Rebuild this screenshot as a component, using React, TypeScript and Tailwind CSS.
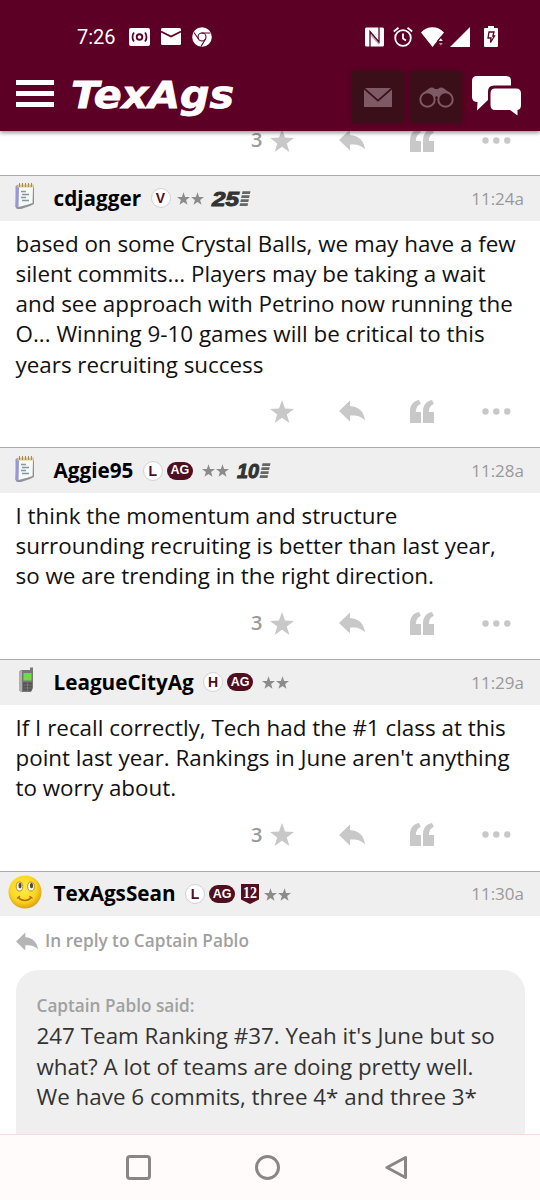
import type { ReactNode } from "react";

const Star = ({ className }: { className: string }) => (
  <svg viewBox="0 0 24 23" className={className} fill="currentColor">
    <path d="M12 0l3 8.6 9 .3-7.200 5.500 2.600 8.600L12 17.800 4.600 23l2.600-8.600L0 8.900l9-.3z" />
  </svg>
);

const ReplyArrow = ({ className }: { className: string }) => (
  <svg viewBox="0 0 26 22" className={className} fill="currentColor">
    <path d="M0 11L11 .500V6c8.500.500 14 5.500 15 14.500-4-4.500-8.500-5.500-15-5V21.500z" />
  </svg>
);

const Quote = () => (
  <svg viewBox="0 0 24 23" className="h-[23px] w-6" fill="currentColor">
    <path d="M0 23V11.500C0 5 3.500 1 9 0l1.800 3.800C8 5 6 7.500 5.800 12H11V23z" />
    <path d="M13 23V11.500C13 5 16.500 1 22 0l1.800 3.800C21 5 19 7.500 18.800 12H24V23z" />
  </svg>
);

const Dots = () => (
  <svg viewBox="0 0 29 7" className="h-[7px] w-[29px]" fill="currentColor">
    <circle cx="3.500" cy="3.500" r="3.200" />
    <circle cx="14.300" cy="3.500" r="3.200" />
    <circle cx="25.300" cy="3.500" r="3.200" />
  </svg>
);

const Notepad = () => (
  <svg viewBox="0 0 20 26" className="h-[26px] w-5">
    <path d="M1.500 2h17.500v19l-4 2-9 3H2l-1.500-2z" fill="#8e9299" />
    <path d="M.500 3h4l-1 21H.500z" fill="#9a96d6" />
    <path d="M4 4H18l-.5 16-4.500 1.500L3.500 24z" fill="#f7f9f7" />
    <path d="M2.500 1.500H19v3H2.500z" fill="#dccb97" />
    <path d="M4.500 0v4M7.500 0v4M10.500 0v4M13.500 0v4M16.500 0v4" stroke="#a8894e" />
    <path d="M6 8.500h5M7 11.500h7M6 14.500h5M7 17.500h7" stroke="#8299a0" strokeWidth="1.500" />
  </svg>
);

const Phone = () => (
  <svg viewBox="0 0 16 26" className="ml-[2px] h-[26px] w-4">
    <path d="M12 3V.500h3V21l-2 4H3l-2-2V5l2-2z" fill="#777" />
    <path d="M1 5l3-2v22H3l-2-2z" fill="#b0b0b0" />
    <path d="M5.500 6h8v7.500h-8z" fill="#6fdc45" />
    <path d="M5 15.500h9l-.5 8H5z" fill="#515151" />
    <path d="M5.500 18h8M5.500 21h8M9.500 15.500v8" stroke="#808080" strokeWidth=".8" />
  </svg>
);

const Smiley = () => (
  <svg viewBox="0 0 34 34" className="h-[34px] w-[34px]">
    <defs>
      <radialGradient id="face" cx=".45" cy=".4" r=".6">
        <stop offset="0" stopColor="#ffee45" />
        <stop offset=".65" stopColor="#fbd722" />
        <stop offset="1" stopColor="#dfa216" />
      </radialGradient>
    </defs>
    <circle cx="17" cy="17" r="16.500" fill="url(#face)" />
    <ellipse cx="11.500" cy="11.500" rx="3.300" ry="4.500" fill="#fff" stroke="#b98a25" />
    <ellipse cx="23" cy="11.500" rx="3.300" ry="4.500" fill="#fff" stroke="#b98a25" />
    <ellipse cx="12" cy="10.500" rx="1.600" ry="2.800" fill="#5d482b" />
    <ellipse cx="23.500" cy="10.500" rx="1.600" ry="2.800" fill="#5d482b" />
    <path d="M10.500 22.500c3 4 9.500 4 12.500 0M9.500 23l2-1.500M22 21.500l2 1.500" fill="none" stroke="#b46b13" strokeWidth="1.500" strokeLinecap="round" />
  </svg>
);

const Letter = ({ children }: { children: string }) => (
  <span className="ml-[9.500px] flex h-5 w-5 items-center justify-center rounded-full border border-[#d2d2d2] bg-white font-['Liberation_Sans',sans-serif] text-[14px] leading-none font-bold text-[#500f20]">
    {children}
  </span>
);

const AgBadge = () => (
  <span className="ml-1 flex h-[18px] w-[26px] items-center justify-center rounded-full bg-[#500f20] font-['Liberation_Sans',sans-serif] text-[12.500px] leading-none font-bold text-white">
    AG
  </span>
);

const Twelve = () => (
  <svg viewBox="0 0 18 20" className="ml-[6px] h-5 w-[18px]">
    <path d="M0 0h18v15.500L9 20l-9-4.500z" fill="#500f20" />
    <text x="2" y="14" textLength="14" lengthAdjust="spacingAndGlyphs" fill="#fff" fontFamily="Liberation Serif, serif" fontWeight="700" fontSize="17">12</text>
  </svg>
);

const Stars = ({ className }: { className: string }) => (
  <span className={`flex gap-[1px] text-[#8b8b8b] ${className}`}>
    <Star className="h-[13px] w-[13px]" />
    <Star className="h-[13px] w-[13px]" />
  </span>
);

// Years-of-membership mark with the speed stripes
const Years = ({ value, digits }: { value: string; digits: number }) => (
  <span className="ml-2 flex items-center">
    <svg width={digits} height="17" className="overflow-visible">
      <text x="0" y="16" textLength={digits} lengthAdjust="spacingAndGlyphs" fill="#333" stroke="#333" strokeWidth="1" fontFamily="Liberation Sans, sans-serif" fontWeight="700" fontStyle="italic" fontSize="20.500">{value}</text>
    </svg>
    <svg viewBox="0 0 12 17" className="h-[17px] w-3">
      <path d="M3.500 1.300h8l-.6 2.800h-8zM2.700 5.300h8l-.6 2.800h-8zM1.900 9.300h8l-.6 2.800h-8zM1.100 13.300h8l-.6 2.800h-8z" fill="#666" />
    </svg>
  </span>
);

const Actions = ({ count }: { count?: string }) => (
  <div className="flex h-6 items-center justify-end pr-[29.500px] text-[#c8c8c8]">
    {count && <span className="mr-[7px] text-xl leading-6 font-semibold text-[#9a9a9a]">{count}</span>}
    <Star className="h-[23px] w-6" />
    <ReplyArrow className="ml-[45px] h-[22px] w-[26px]" />
    <span className="ml-[45px]"><Quote /></span>
    <span className="ml-12"><Dots /></span>
  </div>
);

interface PostHeaderProps {
  avatar: ReactNode;
  name: string;
  time: string;
  children: ReactNode;
}

const PostHeader = ({ avatar, name, time, children }: PostHeaderProps) => (
  <div className="flex h-[45.500px] items-center border-t border-[#aaa] bg-[#efefef] pr-4">
    <div className="mr-[3.500px] mb-1 flex w-[50px] items-center justify-center">{avatar}</div>
    <span className="text-[20.700px] font-bold text-black">{name}</span>
    <div className="flex items-center">{children}</div>
    <span className="ml-auto text-[17px] text-[#999]">{time}</span>
  </div>
);

const Body = ({ lines, count }: { lines: string[]; count?: string }) => (
  <>
    <div className="px-[15.500px] pt-2 text-[22.400px] leading-[30.250px] text-[#111]">
      {lines.map((line) => (
        <p key={line} className="whitespace-nowrap">{line}</p>
      ))}
    </div>
    <div className="mt-[19.500px] mb-6"><Actions count={count} /></div>
  </>
);

const StatusBar = () => (
  <div className="flex h-[71px] items-center pt-[2px] pl-[77px] font-['Roboto',sans-serif] text-xl">
    <span className="w-[52px]">7:26</span>
    <svg viewBox="0 0 21 18" className="h-[18px] w-[21px]">
      <rect width="21" height="18" rx="2" fill="#fff" />
      <circle cx="10.500" cy="9" r="2.800" fill="none" stroke="#5c0025" strokeWidth="1.900" />
      <path d="M5 4.500c-2 2.500-2 6.500 0 9M16 4.500c2 2.500 2 6.500 0 9" fill="none" stroke="#5c0025" strokeWidth="1.800" />
    </svg>
    <svg viewBox="0 0 20 17" className="ml-[11px] h-[17px] w-5">
      <rect width="20" height="17" rx="1.500" fill="#fff" />
      <path d="M0 3.500l10 5 10-5" fill="none" stroke="#5c0025" strokeWidth="1.600" />
    </svg>
    <svg viewBox="0 0 20 20" className="ml-[11px] h-5 w-5">
      <circle cx="10" cy="10" r="9.800" fill="#fff" />
      <circle cx="10" cy="10" r="4" fill="none" stroke="#5c0025" strokeWidth="1.100" />
      <path d="M2 5.500l4.500 6.500M9.500 6H18.500M13.500 12L9 19.500" stroke="#5c0025" strokeWidth="1.100" />
    </svg>
    <div className="mr-[42.500px] ml-auto flex items-center">
      <svg viewBox="0 0 19 20" className="h-5 w-[19px]">
        <rect y=".500" width="19" height="19" rx="1.500" fill="#fff" />
        <path d="M5 20V4.500l9 10.500V0" fill="none" stroke="#5c0025" strokeWidth="1.300" />
        <path d="M5 5v3l9 10v-3z" fill="#5c0025" opacity=".35" />
      </svg>
      <svg viewBox="0 0 20 20" className="ml-[9px] h-5 w-5" fill="none" stroke="#fff" strokeWidth="1.800">
        <circle cx="10" cy="11" r="7.800" />
        <path d="M10 6.500v5l3 2M.8 4.500L5.500.8M19.200 4.500L14.500.8" />
      </svg>
      <svg viewBox="0 0 23 20" className="ml-2 h-5 w-[23px]" fill="#fff">
        <path d="M0 5.500C6-1.500 17-1.500 23 5.500L19 10.500 11.500 20z" />
        <path d="M16 13.800l4-4.500 4 4.500v7h-8z" fill="#5c0025" />
        <path d="M17.800 14l2-2.800 2 2.800z" />
        <path d="M17.800 16l2 2.500 2-2.500z" opacity=".6" />
      </svg>
      <svg viewBox="0 0 20 20" className="ml-[6px] h-5 w-5" fill="#fff">
        <path d="M20 0v20H0z" />
      </svg>
      <svg viewBox="0 0 14 21" className="ml-[14px] h-[21px] w-[14px]">
        <path d="M4 0h6v2h3q1 0 1 1v17q0 1-1 1H1q-1 0-1-1V3q0-1 1-1h3z" fill="#fff" />
        <path d="M5 6h5L8.800 10h1.700L6.500 16.500l.5-4.500H4z" fill="none" stroke="#5c0025" strokeWidth="1.300" />
      </svg>
    </div>
  </div>
);

const AppBar = () => (
  <div className="flex h-[60px] items-start pr-[19px] pl-4">
    <button type="button" className="mt-[8.500px] flex flex-col gap-[6px]">
      <span className="h-[5px] w-[38px] bg-white" />
      <span className="h-[5px] w-[38px] bg-white" />
      <span className="h-[5px] w-[38px] bg-white" />
    </button>
    <svg viewBox="0 0 162 50" className="ml-5 h-[50px] w-[162px] overflow-visible">
      <text x="-3" y="37" textLength="163" lengthAdjust="spacingAndGlyphs" fill="#fff" stroke="#fff" strokeWidth=".8" fontFamily="DejaVu Sans, sans-serif" fontWeight="700" fontStyle="italic" fontSize="36.500">TexAgs</text>
    </svg>
    <div className="ml-auto flex">
      <div className="flex h-[52px] w-[52px] items-center justify-center rounded-[3px] bg-[#3b0f1a] shadow-[0_0_4px_#3b0f1a]">
        <svg viewBox="0 0 28 19" className="h-[19px] w-7" fill="#7d5a64">
          <path d="M1 0h26L14 11.500zM0 1.500l14 12.300L28 1.500V19H0z" />
        </svg>
      </div>
      <div className="ml-[6px] flex h-[52px] w-[52px] items-center justify-center rounded-[3px] bg-[#3b0f1a] shadow-[0_0_4px_#3b0f1a]">
        <svg viewBox="0 0 35 21" className="h-[21px] w-[35px]">
          <path d="M4 6L10 1.500Q13-.500 16 2h3Q22-.500 25 1.500L31 6l-8 5h-3l-2.500-2-2.500 2h-3z" fill="#7d5a64" />
          <circle cx="8.500" cy="12.500" r="7.200" fill="#3b0f1a" stroke="#7d5a64" strokeWidth="2" />
          <circle cx="26.500" cy="12.500" r="7.200" fill="#3b0f1a" stroke="#7d5a64" strokeWidth="2" />
        </svg>
      </div>
      <svg viewBox="0 0 49 40" className="mt-[5px] ml-[10px] h-10 w-[49px]" fill="#fff">
        <path d="M5 0h29q5 0 5 5v4.500H22q-6 0-6 6v8.500L5 34.500 5.500 26Q0 26 0 21V5q0-5 5-5z" />
        <path d="M23 12.500h21q5 0 5 5V29q0 4.500-3.500 5v5.500L38 34H23q-4.500 0-4.500-5V17.500q0-5 4.500-5z" />
      </svg>
    </div>
  </div>
);

const NavBar = () => (
  <nav className="h-[66px] shrink-0 border-t border-[#f3dcd8] bg-[#fffbfa] pt-5 pl-[126px] text-[#8a8684]">
    <div className="flex items-center">
      <span className="h-[25px] w-[25px] rounded-[4px] border-[3px] border-current" />
      <span className="ml-[104px] h-[25px] w-[25px] rounded-full border-[3px] border-current" />
      <svg viewBox="0 0 23 25" className="ml-[105px] h-[25px] w-[23px]" fill="none" stroke="currentColor" strokeWidth="3" strokeLinejoin="round">
        <path d="M20.500 2.500v20L2 12.500z" />
      </svg>
    </div>
  </nav>
);

export default function App() {
  return (
    <div className="flex h-[1200px] w-[540px] flex-col overflow-hidden bg-white font-['Open_Sans',sans-serif]">
      <header className="relative z-10 h-[131px] shrink-0 bg-[#5c0025] text-white shadow-[0_2px_4px_rgba(0,0,0,0.4)]">
        <StatusBar />
        <AppBar />
      </header>

      <main className="-mt-[3px] min-h-0 flex-1 overflow-hidden">
        <div className="h-[47px]"><Actions count="3" /></div>

        <PostHeader avatar={<Notepad />} name="cdjagger" time="11:24a">
          <Letter>V</Letter>
          <Stars className="ml-[6px]" />
          <Years value="25" digits={27} />
        </PostHeader>
        <Body
          lines={[
            "based on some Crystal Balls, we may have a few",
            "silent commits... Players may be taking a wait",
            "and see approach with Petrino now running the",
            "O... Winning 9-10 games will be critical to this",
            "years recruiting success",
          ]}
        />

        <PostHeader avatar={<Notepad />} name="Aggie95" time="11:28a">
          <Letter>L</Letter>
          <AgBadge />
          <Stars className="ml-[9px]" />
          <Years value="10" digits={22} />
        </PostHeader>
        <Body
          count="3"
          lines={[
            "I think the momentum and structure",
            "surrounding recruiting is better than last year,",
            "so we are trending in the right direction.",
          ]}
        />

        <PostHeader avatar={<Phone />} name="LeagueCityAg" time="11:29a">
          <Letter>H</Letter>
          <AgBadge />
          <Stars className="ml-[9px]" />
        </PostHeader>
        <Body
          count="3"
          lines={[
            "If I recall correctly, Tech had the #1 class at this",
            "point last year. Rankings in June aren't anything",
            "to worry about.",
          ]}
        />

        <PostHeader avatar={<Smiley />} name="TexAgsSean" time="11:30a">
          <Letter>L</Letter>
          <AgBadge />
          <Twelve />
          <Stars className="ml-[5px]" />
        </PostHeader>
        <div className="mb-1 flex h-[50px] items-center pl-4 text-[17.200px] font-semibold text-[#a0a0a0]">
          <ReplyArrow className="mr-[7px] h-[19px] w-[22px] text-[#b5b5b5]" />
          In reply to Captain Pablo
        </div>
        <div className="mx-[15.500px] h-[200px] rounded-[22px] bg-[#efefef] px-[21px] pt-[21px] leading-[30.250px]">
          <p className="text-[17.200px] leading-[30px] font-semibold text-[#a0a0a0]">Captain Pablo said:</p>
          <div className="text-[22.400px] whitespace-nowrap text-[#333]">
            <p>247 Team Ranking #37. Yeah it's June but so</p>
            <p>what? A lot of teams are doing pretty well.</p>
            <p>We have 6 commits, three 4* and three 3*</p>
          </div>
        </div>
      </main>

      <NavBar />
    </div>
  );
}
